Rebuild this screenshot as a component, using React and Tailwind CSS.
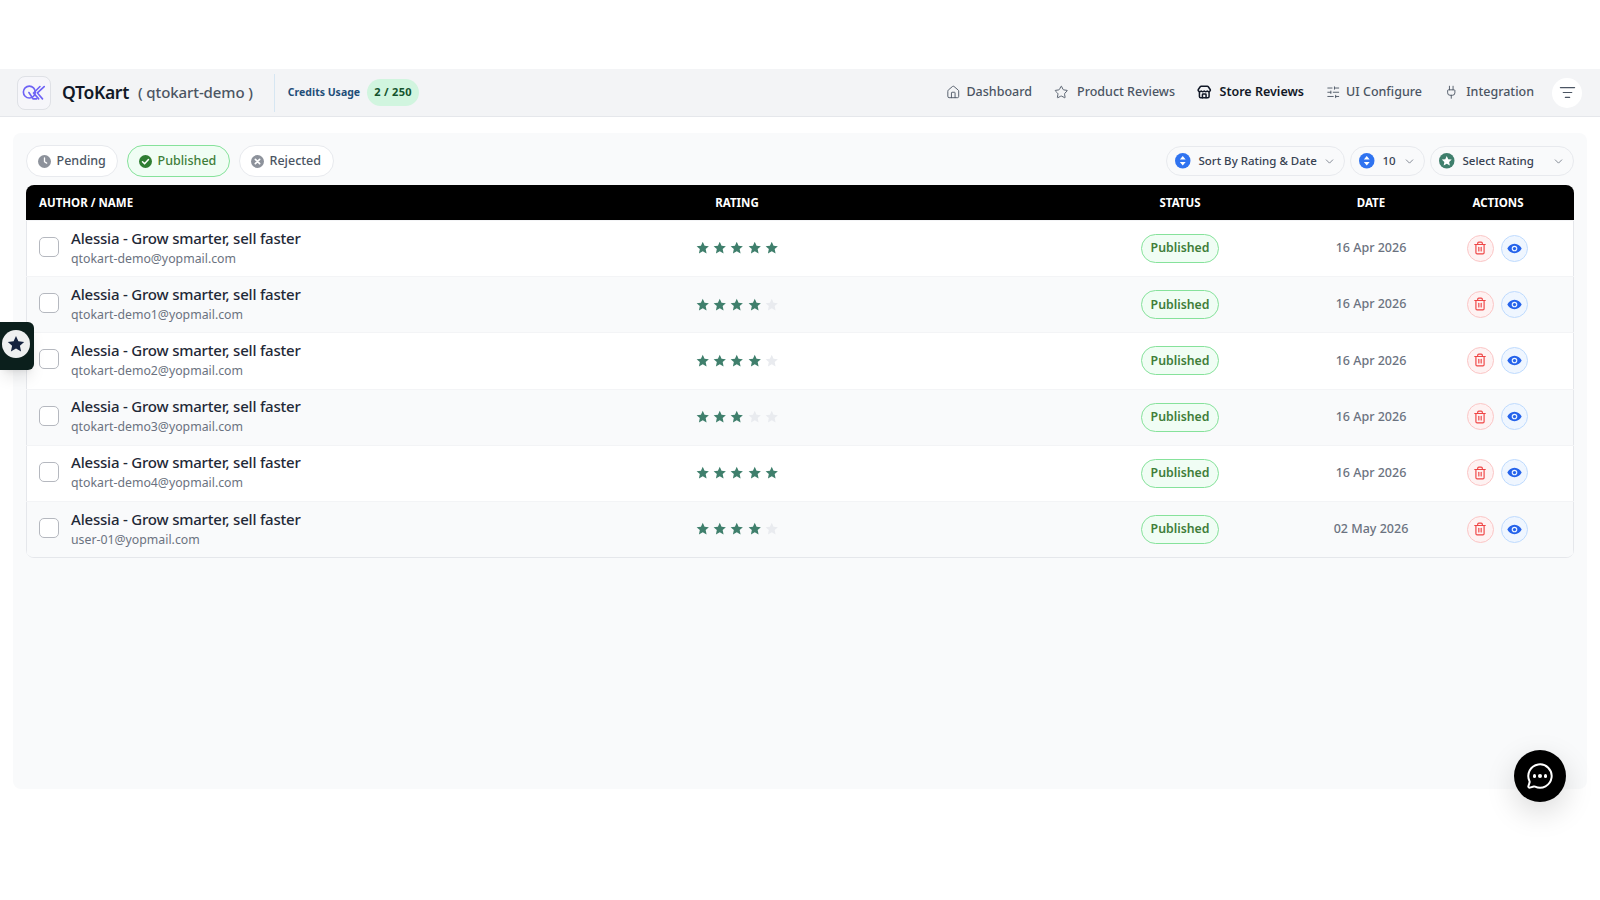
import { ChevronDown, Home, ListFilter, MessageCircle, Plug, SlidersHorizontal, Star, Store, Trash2 } from "lucide-react";

const reviews = [
  { email: "qtokart-demo@yopmail.com", rating: 5, date: "16 Apr 2026" },
  { email: "qtokart-demo1@yopmail.com", rating: 4, date: "16 Apr 2026" },
  { email: "qtokart-demo2@yopmail.com", rating: 4, date: "16 Apr 2026" },
  { email: "qtokart-demo3@yopmail.com", rating: 3, date: "16 Apr 2026" },
  { email: "qtokart-demo4@yopmail.com", rating: 5, date: "16 Apr 2026" },
  { email: "user-01@yopmail.com", rating: 4, date: "02 May 2026" },
];

const navLinks = [
  { label: "Dashboard", icon: Home, className: "w-[86px]" },
  { label: "Product Reviews", icon: Star, className: "w-[121px]" },
  { label: "Store Reviews", icon: Store, active: true, className: "w-[107px]" },
  { label: "UI Configure", icon: SlidersHorizontal, className: "w-[96px]" },
  { label: "Integration", icon: Plug, className: "w-[90px]" },
];

function StarShape({ className }) {
  return (
    <svg viewBox="0 0 24 24" className={className} fill="currentColor">
      <path d="M12 1.200l3.200 7.100 7.700.9-5.700 5.200 1.600 7.600L12 18.100l-6.800 3.900 1.600-7.600-5.700-5.200 7.700-.9z" />
    </svg>
  );
}

function ClockBadge({ className }) {
  return (
    <svg viewBox="0 0 24 24" className={className}>
      <circle cx="12" cy="12" r="12" fill="currentColor" />
      <path d="M12 5.500V12.500L16 15" fill="none" stroke="#fff" strokeWidth="2.400" strokeLinecap="round" strokeLinejoin="round" />
    </svg>
  );
}

function CheckBadge({ className }) {
  return (
    <svg viewBox="0 0 24 24" className={className}>
      <circle cx="12" cy="12" r="12" fill="currentColor" />
      <path d="M6.500 12.500l3.800 3.800 7.200-8" fill="none" stroke="#fff" strokeWidth="2.800" strokeLinecap="round" strokeLinejoin="round" />
    </svg>
  );
}

function CrossBadge({ className }) {
  return (
    <svg viewBox="0 0 24 24" className={className}>
      <circle cx="12" cy="12" r="12" fill="currentColor" />
      <path d="M8 8l8 8M16 8l-8 8" fill="none" stroke="#fff" strokeWidth="3" strokeLinecap="round" />
    </svg>
  );
}

function SortBadge({ className }) {
  return (
    <svg viewBox="0 0 24 24" className={className}>
      <circle cx="12" cy="12" r="12" fill="currentColor" />
      <path d="M12 4.500l4.500 5.500h-9zM12 19.500L7.500 14h9z" fill="#fff" />
    </svg>
  );
}

function StarBadge({ className }) {
  return (
    <svg viewBox="0 0 24 24" className={className}>
      <circle cx="12" cy="12" r="12" fill="currentColor" />
      <path d="M12 4.500l2.300 5 5.400.6-4 3.700 1.100 5.400-4.800-2.700-4.800 2.700 1.100-5.400-4-3.700 5.400-.6z" fill="#fff" />
    </svg>
  );
}

function EyeSolid({ className }) {
  return (
    <svg viewBox="0 0 24 24" className={className}>
      <path fillRule="evenodd" fill="currentColor" d="M12 4.500C6.500 4.500 2.300 8 .5 12c1.800 4 6 7.500 11.500 7.500S21.700 16 23.500 12C21.700 8 17.500 4.500 12 4.500zM12 7.500a4.500 4.500 0 1 1 0 9 4.500 4.500 0 0 1 0-9z" />
      <circle cx="12" cy="12" r="2.600" fill="currentColor" />
    </svg>
  );
}

function Logo() {
  return (
    <svg viewBox="0 0 28 20" className="h-[17px] w-[24px]" fill="none" stroke="#6d62f5" strokeWidth="1.900" strokeLinecap="round">
      <circle cx="8.500" cy="9.500" r="7" />
      <path d="M8 10l5 7.500h4" />
      <path d="M21 3l-7.500 7.500 6 7" />
      <path d="M26 3l-8 7.500 6 7" />
    </svg>
  );
}

function Tab({ icon: Icon, label, active, className }) {
  return (
    <button type="button" className={`flex h-8 items-center gap-[6px] rounded-full border pl-[10.500px] text-[12.500px] font-medium ${active ? "border-[#86e29b] bg-[#f0fdf4] text-[#3f7d3a]" : "border-[#e8eaee] bg-white text-[#4b5563]"} ${className}`}>
      <Icon className={`size-[13px] ${active ? "text-[#2f7d32]" : "text-[#8d929b]"}`} />
      {label}
    </button>
  );
}

function Select({ icon: Icon, iconColor, label, className }) {
  return (
    <button type="button" className={`flex h-[30px] items-center rounded-full border border-[#e8eaee] bg-[#f9fafb] pl-[8px] text-[11.500px] font-medium text-[#374151] ${className}`}>
      <Icon className={`size-[15.500px] shrink-0 ${iconColor}`} />
      <span className="ml-[8px] whitespace-nowrap">{label}</span>
      <ChevronDown className="ml-auto mr-[8px] size-[13px] text-[#6b7280]" strokeWidth={1.500} />
    </button>
  );
}

function Rating({ value }) {
  return (
    <div className="mb-[1px] flex items-center justify-center gap-[3.800px]">
      {[1, 2, 3, 4, 5].map((n) => (
        <StarShape key={n} className={`size-[13.500px] ${n <= value ? "text-[#3f7f6c]" : "text-[#e9ebef]"}`} />
      ))}
    </div>
  );
}

export default function App() {
  return (
    <div className="relative min-h-[900px] bg-white pt-[69px] font-['Noto_Sans',sans-serif]">
      <header className="flex h-[48px] items-center border-b border-[#e5e7eb] bg-[#f3f4f6] pl-[17px] pr-[18px]">
        <div className="flex size-[34px] items-center justify-center rounded-lg border border-[#dfe1e6] bg-[#f6f6fa]">
          <Logo />
        </div>
        <span className="ml-[11px] text-[17.500px] font-semibold tracking-[-0.3px] text-[#111827]">QToKart</span>
        <span className="ml-[9px] text-[15px] font-medium tracking-[-0.1px] text-[#4b5563]">( qtokart-demo )</span>
        <div className="ml-[21px] h-[38px] w-px bg-[#d6e6f2]" />
        <span className="ml-[13px] text-[10.500px] font-bold text-[#1f4e79]">Credits Usage</span>
        <span className="ml-[7px] flex h-[27px] w-[52px] items-center justify-center rounded-full bg-[#d1f5df] text-[11px] font-bold tracking-[0.3px] text-[#14532d]">2 / 250</span>
        <nav className="ml-auto flex items-center gap-[22px]">
          {navLinks.map(({ label, icon: Icon, active, className }) => (
            <a key={label} className={`flex items-center justify-between whitespace-nowrap text-[12.500px] font-medium ${active ? "font-semibold text-[#111827]" : "text-[#4b5563]"} ${className}`}>
              <Icon className="size-[14.500px] shrink-0" strokeWidth={active ? 2.500 : 1.500} />
              {label}
            </a>
          ))}
        </nav>
        <button type="button" className="ml-[18px] flex size-[30px] items-center justify-center rounded-full bg-white text-[#4b5563]">
          <ListFilter className="size-[17px]" strokeWidth={1.700} />
        </button>
      </header>

      <main className="mx-[13px] mt-[16px] h-[656px] rounded-lg bg-[#f9fafb] px-[13px] pt-[12px]">
        <div className="flex items-center">
          <div className="flex items-center gap-[9px]">
            <Tab icon={ClockBadge} label="Pending" className="w-[92px]" />
            <Tab icon={CheckBadge} label="Published" active className="w-[103px]" />
            <Tab icon={CrossBadge} label="Rejected" className="w-[95px]" />
          </div>
          <div className="ml-auto flex items-center gap-[5px]">
            <Select icon={SortBadge} iconColor="text-[#2f73f0]" label="Sort By Rating & Date" className="w-[179px]" />
            <Select icon={SortBadge} iconColor="text-[#2f73f0]" label="10" className="w-[75px]" />
            <Select icon={StarBadge} iconColor="text-[#3f7f6c]" label="Select Rating" className="w-[144px]" />
          </div>
        </div>

        <div className="mt-[8px] overflow-hidden rounded-lg border-b border-[#e5e7eb]">
          <div className="grid h-[35px] grid-cols-[408px_606px_280px_102px_152px] items-center bg-black text-[11.500px] font-bold text-white">
            <span className="pl-[13px]">AUTHOR / NAME</span>
            <span className="text-center">RATING</span>
            <span className="text-center">STATUS</span>
            <span className="text-center">DATE</span>
            <span className="text-center">ACTIONS</span>
          </div>
          {reviews.map((review, index) => (
            <div key={review.email} className={`grid h-[56.200px] grid-cols-[408px_606px_280px_102px_152px] items-center border-t border-[#f3f4f6] shadow-[inset_1px_0_0_#e5e7eb,inset_-1px_0_0_#e5e7eb] ${index % 2 ? "bg-[#f9fafb]" : "bg-white"}`}>
              <div className="flex items-center pl-[13px]">
                <span className="mb-[3px] size-[20px] rounded-[5px] border border-[#b5b8bf] bg-white" />
                <div className="mb-[2px] ml-[12px] min-w-0">
                  <p className="whitespace-nowrap text-[15px] leading-[20px] font-medium tracking-[-0.2px] text-[#1f2937]">Alessia - Grow smarter, sell faster</p>
                  <p className="mt-[2px] whitespace-nowrap text-[12.300px] leading-[18px] text-[#6b7280]">{review.email}</p>
                </div>
              </div>
              <Rating value={review.rating} />
              <div className="flex justify-center">
                <span className="flex h-[29px] w-[78px] items-center justify-center rounded-full border border-[#86e29b] bg-[#f0fdf4] text-[12.300px] font-semibold text-[#3f7d3a]">Published</span>
              </div>
              <span className="text-center text-[12.500px] font-medium text-[#6b7280]">{review.date}</span>
              <div className="mb-[1px] flex items-center justify-center gap-[7px] pr-[2px]">
                <button type="button" className="flex size-[27px] items-center justify-center rounded-full border border-[#fbc6c6] bg-[#fef2f2] text-[#ef4444]">
                  <Trash2 className="size-[14px]" />
                </button>
                <button type="button" className="flex size-[27px] items-center justify-center rounded-full border border-[#bfdbfe] bg-[#eff6ff] text-[#2563eb]">
                  <EyeSolid className="size-[15px]" />
                </button>
              </div>
            </div>
          ))}
        </div>
      </main>

      <div className="absolute left-0 top-[322px] flex h-[48px] w-[34px] items-center rounded-r-md bg-[#0b1f1c] pb-[4px] pl-[2px] shadow-lg">
        <span className="flex size-[28px] items-center justify-center rounded-full bg-[#eef0f0] text-[#14233f]">
          <StarShape className="size-[18px]" />
        </span>
      </div>

      <button type="button" className="absolute left-[1514px] top-[750px] flex size-[52px] items-center justify-center rounded-full bg-black text-white shadow-[0_10px_30px_rgba(0,0,0,0.15)]">
        <MessageCircle className="size-[28px]" strokeWidth={1.700} />
        <span className="absolute flex gap-[2px]">
          <i className="size-[3.500px] rounded-full bg-white" />
          <i className="size-[3.500px] rounded-full bg-white" />
          <i className="size-[3.500px] rounded-full bg-white" />
        </span>
      </button>
    </div>
  );
}
